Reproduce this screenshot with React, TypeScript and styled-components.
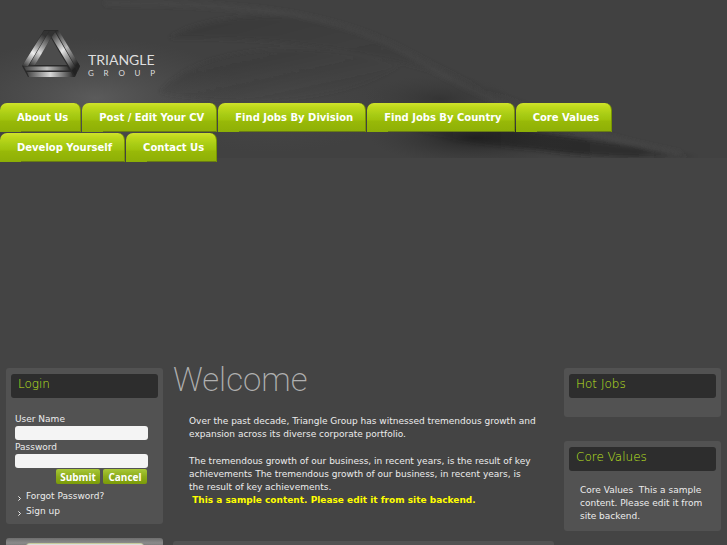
import React from "react";
import styled, { createGlobalStyle } from "styled-components";

const Global = createGlobalStyle`
  * { box-sizing: border-box; }
  html { background: #444; }
  body {
    margin: 0;
    color: #ececec;
    font: 9px/13px "DejaVu Sans", sans-serif;
  }
  h1, h2, p, ul { margin: 0; padding: 0; }
`;

const Page = styled.div`
  position: relative;
  isolation: isolate;
  height: 100vh;
  overflow: hidden;
`;

const Backdrop = styled.svg`
  position: absolute;
  z-index: -1;
  top: 0;
  left: 0;
  width: 100%;
  height: 158px;
`;

const Header = styled.header`
  height: 103px;
  padding: 28px 20px 0;
`;

const Brand = styled.a`
  display: inline-flex;
  align-items: flex-start;
  gap: 6px;
  color: #dedede;
  text-decoration: none;
`;

const Mark = styled.svg`
  width: 62px;
  height: 52px;
`;

const BrandText = styled.span`
  display: flex;
  flex-direction: column;
  width: 67px;
  padding-top: 23px;
`;

const BrandName = styled.span`
  font: 14px/17px Lato, sans-serif;
`;

const BrandSub = styled.span`
  font: 8px/10px Lato, sans-serif;
  text-align: justify;
  text-align-last: justify;
`;

const Nav = styled.nav`
  display: flex;
  flex-wrap: wrap;
  row-gap: 1px;
`;

const Tab = styled.a`
  height: 29px;
  padding: 0 12px 0 17px;
  margin-right: 1px;
  border-right: 1px solid #789500;
  border-radius: 7px 7px 0 0;
  background:
    linear-gradient(#8caf06, #8caf06) left bottom / 21px 1px no-repeat,
    linear-gradient(#cfe32b 0, #bfd91b 4px, #a7cb14 12px, #a0c20b 17px, #98b908 18px, #8fb006 28px, #697d13 28px);
  color: #fff;
  font: bold 10px/29px "DejaVu Sans", sans-serif;
  text-decoration: none;
  white-space: nowrap;
`;

const Columns = styled.main`
  display: flex;
  align-items: flex-start;
  gap: 10px;
  padding: 206px 6px 0;
`;

const Side = styled.div`
  display: flex;
  flex: 0 0 157px;
  flex-direction: column;
`;

const Panel = styled.section<{ $bottom: number; $gap: number }>`
  padding: 6px 5px ${(p) => p.$bottom}px;
  margin-bottom: ${(p) => p.$gap}px;
  border-radius: 3px;
  background: #525252;
`;

const PanelTitle = styled.h2`
  height: 24px;
  padding: 0 7px;
  border-radius: 3px;
  background: #2d2d2d;
  color: #bfe620;
  font: 200 12px/20px "DejaVu Sans", sans-serif;
`;

const PanelText = styled.p`
  padding: 13px 5px 0 11px;
`;

const Form = styled.form`
  display: flex;
  flex-direction: column;
  padding: 14px 10px 0 4px;
`;

const Field = styled.label`
  display: block;
  line-height: 14px;
`;

const Input = styled.input`
  display: block;
  width: 100%;
  height: 14px;
  padding: 0 4px;
  border: 0;
  border-radius: 3px;
  background: #f4f4f4;
  font: 9px "DejaVu Sans", sans-serif;
`;

const Actions = styled.div`
  display: flex;
  justify-content: flex-end;
  gap: 3px;
  padding: 1px 1px 0 0;
`;

const Button = styled.button`
  width: 44px;
  height: 15px;
  padding: 0;
  border: 0;
  border-radius: 2px;
  background: linear-gradient(#a8c837, #8cac1b 50%, #7b9b08);
  color: #fff;
  font: bold 10px/14px "Open Sans", sans-serif;
`;

const Links = styled.ul`
  padding: 5px 0 0 7px;
  list-style: none;
`;

const LinkItem = styled.li`
  display: flex;
  align-items: center;
  gap: 5px;
  height: 15px;
`;

const Chevron = styled.svg`
  width: 3px;
  height: 5px;
  margin-top: 3px;
`;

const TextLink = styled.a`
  color: #ececec;
  text-decoration: none;
`;

const Banner = styled.div`
  height: 30px;
  padding: 5px 19px 0 20px;
  border-radius: 3px 3px 0 0;
  background: linear-gradient(#6e6e6e, #8a8a8a 5px, #777 8px);
`;

const BannerInner = styled.div`
  height: 20px;
  border-radius: 4px 4px 0 0;
  border-top: 1px solid #c4ca9c;
  background: #ddd;
`;

const Center = styled.div`
  flex: 1;
  min-width: 0;
`;

const Title = styled.h1`
  color: #b0b0b0;
  font: 200 33px/24px Roboto, sans-serif;
`;

const Copy = styled.div`
  display: flex;
  flex-direction: column;
  gap: 14px;
  padding: 23px 16px 0;
`;

const Note = styled.strong`
  color: #ff0;
  white-space: pre;
`;

const NextPanel = styled.div`
  height: 30px;
  margin-top: 34px;
  border-radius: 3px;
  background: #525252;
`;

const tabs = ["About Us", "Post / Edit Your CV", "Find Jobs By Division", "Find Jobs By Country", "Core Values", "Develop Yourself", "Contact Us"];

function Waves() {
  return (
    <Backdrop viewBox="0 0 727 158" preserveAspectRatio="none" aria-hidden="true">
      <defs>
        <filter id="soft" x="-10%" y="-20%" width="120%" height="140%">
          <feGaussianBlur stdDeviation="2" />
        </filter>
        <radialGradient id="glow">
          <stop offset="0" stopColor="#666" stopOpacity=".7" />
          <stop offset="1" stopColor="#555" stopOpacity="0" />
        </radialGradient>
        <radialGradient id="shade">
          <stop offset="0" stopColor="#1c1c1c" stopOpacity=".85" />
          <stop offset="1" stopColor="#333" stopOpacity="0" />
        </radialGradient>
        <linearGradient id="fold" x1="0" y1="0" x2="1" y2="1">
          <stop offset="0" stopColor="#363636" />
          <stop offset="1" stopColor="#434343" stopOpacity="0" />
        </linearGradient>
        <linearGradient id="tail" x1="0" y1="0" x2="1" y2="0">
          <stop offset="0" stopColor="#222" stopOpacity="0" />
          <stop offset=".4" stopColor="#202020" />
          <stop offset=".8" stopColor="#282828" />
          <stop offset="1" stopColor="#333" stopOpacity="0" />
        </linearGradient>
      </defs>
      <rect width="727" height="158" fill="#414141" />
      <ellipse cx="95" cy="98" rx="150" ry="60" fill="url(#glow)" />
      <ellipse cx="270" cy="108" rx="120" ry="45" fill="url(#glow)" opacity=".3" />
      <g filter="url(#soft)">
        <path d="M170 38C205 12 310 5 390 42C460 76 520 115 690 157C570 125 500 91 435 72C350 46 260 37 170 38Z" fill="url(#fold)" opacity=".6" />
        <path d="M160 92C200 43 320 39 400 65C350 100 250 111 160 92Z" fill="url(#fold)" opacity=".6" />
        <path d="M390 122C470 118 600 142 702 157C640 158 590 157 540 150C480 145 430 138 390 122Z" fill="url(#tail)" opacity=".75" />
        <path d="M105 3C270 3 350 17 425 64C490 105 570 131 680 154" fill="none" stroke="#4c4c4c" strokeWidth="4" opacity=".5" />
      </g>
      <ellipse cx="440" cy="99" rx="75" ry="24" fill="url(#shade)" opacity=".4" />
      <ellipse cx="475" cy="138" rx="105" ry="26" fill="url(#shade)" opacity=".95" />
    </Backdrop>
  );
}

function TriangleMark() {
  return (
    <Mark viewBox="0 0 62 52" aria-hidden="true">
      <defs>
        <linearGradient id="l" x1="0" y1="1" x2=".6" y2="0">
          <stop offset="0" stopColor="#2c2c2c" />
          <stop offset=".45" stopColor="#f0f0f0" />
          <stop offset=".7" stopColor="#8c8c8c" />
          <stop offset="1" stopColor="#333" />
        </linearGradient>
        <linearGradient id="r" x1="0" y1="0" x2=".6" y2="1">
          <stop offset="0" stopColor="#262626" />
          <stop offset=".5" stopColor="#e6e6e6" />
          <stop offset="1" stopColor="#222" />
        </linearGradient>
        <linearGradient id="b" x1="0" y1="0" x2="1" y2="0">
          <stop offset="0" stopColor="#444" />
          <stop offset=".5" stopColor="#d8d8d8" />
          <stop offset="1" stopColor="#2c2c2c" />
        </linearGradient>
      </defs>
      <path d="M24 2H38L60 38L55 49H8L2 38Z" fill="#2a2a2a" />
      <path d="M31 10L47 37H15Z" fill="#4c4c4c" />
      <path d="M24 3L29 3L8 38L2 38Z" fill="url(#l)" />
      <path d="M29.500 3L35 3L15 37L9 37.500Z" fill="url(#l)" opacity=".9" />
      <path d="M35.500 3L39 3L60 38L58 43Z" fill="url(#r)" opacity=".75" />
      <path d="M31.500 9L35 4L57.500 43L55 48Z" fill="url(#r)" />
      <path d="M4 38.500H47L50 42.500H6Z" fill="url(#b)" opacity=".85" />
      <path d="M7 44H51L53.500 49H9Z" fill="url(#b)" />
    </Mark>
  );
}

function Arrow() {
  return (
    <Chevron viewBox="0 0 3 5" aria-hidden="true">
      <path d="M.4 .4L2.5 2.5L.4 4.6" fill="none" stroke="#eee" />
    </Chevron>
  );
}

export default function App() {
  return (
    <Page>
      <Global />
      <Waves />
      <Header>
        <Brand href="#">
          <TriangleMark />
          <BrandText>
            <BrandName>TRIANGLE</BrandName>
            <BrandSub>G R O U P</BrandSub>
          </BrandText>
        </Brand>
      </Header>
      <Nav>
        {tabs.map((t) => (
          <Tab href="#" key={t}>{t}</Tab>
        ))}
      </Nav>
      <Columns>
        <Side>
          <Panel $bottom={5} $gap={14}>
            <PanelTitle>Login</PanelTitle>
            <Form onSubmit={(e) => e.preventDefault()}>
              <Field htmlFor="user">User Name</Field>
              <Input id="user" type="text" />
              <Field htmlFor="pass">Password</Field>
              <Input id="pass" type="password" />
              <Actions>
                <Button type="submit">Submit</Button>
                <Button type="reset">Cancel</Button>
              </Actions>
            </Form>
            <Links>
              <LinkItem><Arrow /><TextLink href="#">Forgot Password?</TextLink></LinkItem>
              <LinkItem><Arrow /><TextLink href="#">Sign up</TextLink></LinkItem>
            </Links>
          </Panel>
          <Banner><BannerInner /></Banner>
        </Side>
        <Center>
          <Title>Welcome</Title>
          <Copy>
            <p>Over the past decade, Triangle Group has witnessed tremendous growth and expansion across its diverse corporate portfolio.</p>
            <p>
              The tremendous growth of our business, in recent years, is the result of key achievements The tremendous growth of our business, in recent years, is the result of key achievements.
              <br />
              <Note>{" This a sample content. Please edit it from site backend."}</Note>
            </p>
          </Copy>
          <NextPanel />
        </Center>
        <Side>
          <Panel $bottom={19} $gap={24}>
            <PanelTitle>Hot Jobs</PanelTitle>
          </Panel>
          <Panel $bottom={8} $gap={14}>
            <PanelTitle>Core Values</PanelTitle>
            <PanelText>Core Values &nbsp;This a sample content. Please edit it from site backend.</PanelText>
          </Panel>
        </Side>
      </Columns>
    </Page>
  );
}
